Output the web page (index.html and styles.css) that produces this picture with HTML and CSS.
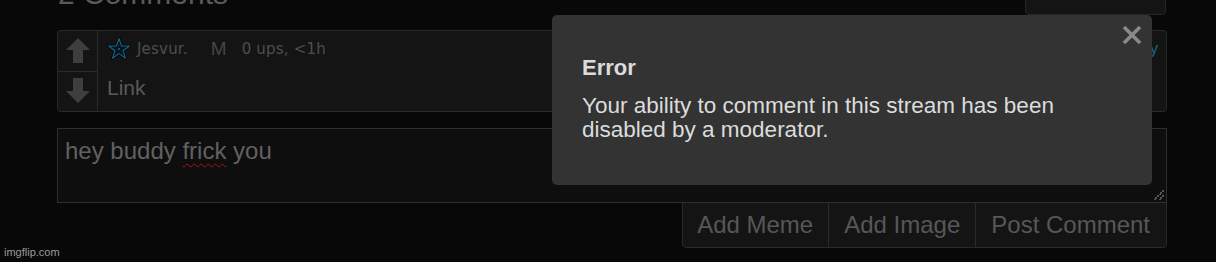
FILE: index.html
```html
<!DOCTYPE html>
<html>
<head>
<meta charset="utf-8">
<link rel="stylesheet" href="styles.css">
</head>
<body>
<div class="page">
  <div class="header">
    <h2 class="heading">2 Comments</h2>
    <div class="top-btn"></div>
  </div>

  <div class="comment">
    <div class="votes">
      <div class="vote">
        <svg width="24" height="26" viewBox="0 0 24 26"><polygon points="12,0 24,12 17,12 17,25 7,25 7,12 0,12" fill="#3e3e3e"/></svg>
      </div>
      <div class="vote vote-down">
        <svg width="24" height="26" viewBox="0 0 24 26"><polygon points="12,25 24,13 17,13 17,0 7,0 7,13 0,13" fill="#3e3e3e"/></svg>
      </div>
    </div>
    <div class="comment-body">
      <div class="meta">
        <svg class="star" width="24" height="24" viewBox="0 0 24 24"><polygon points="12,1.5 14.6,9 22.5,9 16.1,13.7 18.5,21.3 12,16.6 5.5,21.3 7.9,13.7 1.5,9 9.4,9" fill="#060606" stroke="#000" stroke-width="2.6" stroke-linejoin="round"/><polygon points="12,1.5 14.6,9 22.5,9 16.1,13.7 18.5,21.3 12,16.6 5.5,21.3 7.9,13.7 1.5,9 9.4,9" fill="#071520" stroke="#1b6489" stroke-width="1.1" stroke-linejoin="round"/><circle cx="12" cy="12" r="1" fill="#1b6489"/></svg>
        <span class="user">Jesvur.</span>
        <span class="mod">M</span>
        <span class="ups">0 ups, &lt;1h</span>
        <span class="reply">reply</span>
      </div>
      <div class="link">Link</div>
    </div>
  </div>

  <div class="input">hey buddy <span class="spell">frick</span> you<span class="grip"></span></div>

  <div class="actions">
    <div class="btn btn-first">Add Meme</div>
    <div class="btn">Add Image</div>
    <div class="btn btn-last">Post Comment</div>
  </div>
</div>

<div class="modal">
  <svg class="close" width="20" height="20" viewBox="0 0 20 20"><path d="M2 2 L18 18 M18 2 L2 18" stroke="#8a8a8a" stroke-width="3.6" stroke-linecap="butt"/></svg>
  <div class="modal-title">Error</div>
  <div class="modal-text">Your ability to comment in this stream has been<br>disabled by a moderator.</div>
</div>

<div class="watermark">imgflip.com</div>
</body>
</html>
```

FILE: styles.css
```css
html, body {
  margin: 0;
  padding: 0;
  background: #080808;
  overflow: hidden;
}

body {
  width: 1216px;
  height: 262px;
  position: relative;
  font-family: "Liberation Sans", Arial, sans-serif;
}

.page {
  padding-left: 57px;
  width: 1110px;
}

.header {
  display: flex;
  justify-content: space-between;
  align-items: flex-start;
  margin-top: -30px;
  height: 44px;
}

.heading {
  margin: 9px 0 0 1px;
  font-size: 30px;
  line-height: 30px;
  font-weight: normal;
  color: #5a5a5a;
}

.top-btn {
  width: 139px;
  height: 43px;
  margin-right: 1px;
  background: #141414;
  border: 1px solid #262626;
  border-radius: 0 0 4px 4px;
}

.comment {
  margin-top: 16px;
  height: 80px;
  display: flex;
  border: 1px solid #2a2a2a;
  border-radius: 4px;
  background: #141414;
}

.votes {
  width: 39px;
  border-right: 1px solid #2a2a2a;
  display: flex;
  flex-direction: column;
}

.vote {
  height: 40px;
  display: flex;
  align-items: center;
  justify-content: center;
}

.vote-down {
  border-top: 1px solid #2a2a2a;
}

.comment-body {
  flex: 1;
  padding: 6px 8px 0 9px;
}

.meta {
  display: flex;
  align-items: center;
  height: 24px;
  line-height: 24px;
}

.star {
  margin-right: 6px;
}

.user {
  font-family: "DejaVu Sans", Verdana, sans-serif;
  font-size: 15px;
  letter-spacing: 0.2px;
  color: #4e4e4e;
}

.mod {
  font-size: 19px;
  color: #464646;
  margin-left: 23px;
}

.ups {
  font-family: "DejaVu Sans", Verdana, sans-serif;
  font-size: 15px;
  letter-spacing: 0.2px;
  color: #4e4e4e;
  margin-left: 15px;
}

.reply {
  margin-left: auto;
  font-size: 16px;
  color: #1c6688;
}

.link {
  margin-top: 15px;
  font-size: 21px;
  line-height: 24px;
  color: #5a5a5a;
}

.input {
  position: relative;
  margin-top: 16px;
  height: 65px;
  padding: 8px 7px 0 7px;
  border: 1px solid #2e2e2e;
  background: #0e0e0e;
  font-size: 24px;
  line-height: 27px;
  color: #616161;
}

.spell {
  text-decoration: underline wavy #a01818;
  text-decoration-thickness: 1px;
  text-underline-offset: 4px;
}

.grip {
  position: absolute;
  right: 2px;
  bottom: 2px;
  width: 10px;
  height: 10px;
  background:
    linear-gradient(135deg, transparent 45%, #555 45%, #555 55%, transparent 55%) no-repeat;
}

.grip::after {
  content: "";
  position: absolute;
  right: 0;
  bottom: 0;
  width: 5px;
  height: 5px;
  background: linear-gradient(135deg, transparent 40%, #555 40%, #555 60%, transparent 60%);
}

.actions {
  display: flex;
  justify-content: flex-end;
  margin-top: -1px;
}

.btn {
  height: 44px;
  line-height: 44px;
  padding: 0 15px;
  font-size: 24px;
  color: #575757;
  background: #141414;
  border: 1px solid #2a2a2a;
  margin-left: -1px;
}

.btn-first {
  border-radius: 0 0 0 4px;
  padding-left: 14px;
}

.btn-last {
  border-radius: 0 0 4px 0;
  padding-right: 16px;
}

.modal {
  position: absolute;
  left: 552px;
  top: 15px;
  width: 540px;
  height: 130px;
  padding: 40px 30px 0 30px;
  background: #333333;
  border-radius: 5px;
}

.close {
  position: absolute;
  left: 570px;
  top: 10px;
}

.modal-title {
  font-size: 22px;
  line-height: 26px;
  font-weight: bold;
  color: #dcdcdc;
}

.modal-text {
  margin-top: 13px;
  font-size: 22.5px;
  line-height: 23.5px;
  color: #dcdcdc;
}

.watermark {
  position: absolute;
  left: 4px;
  top: 245px;
  font-size: 11px;
  line-height: 14px;
  color: #9a9a9a;
}
```
